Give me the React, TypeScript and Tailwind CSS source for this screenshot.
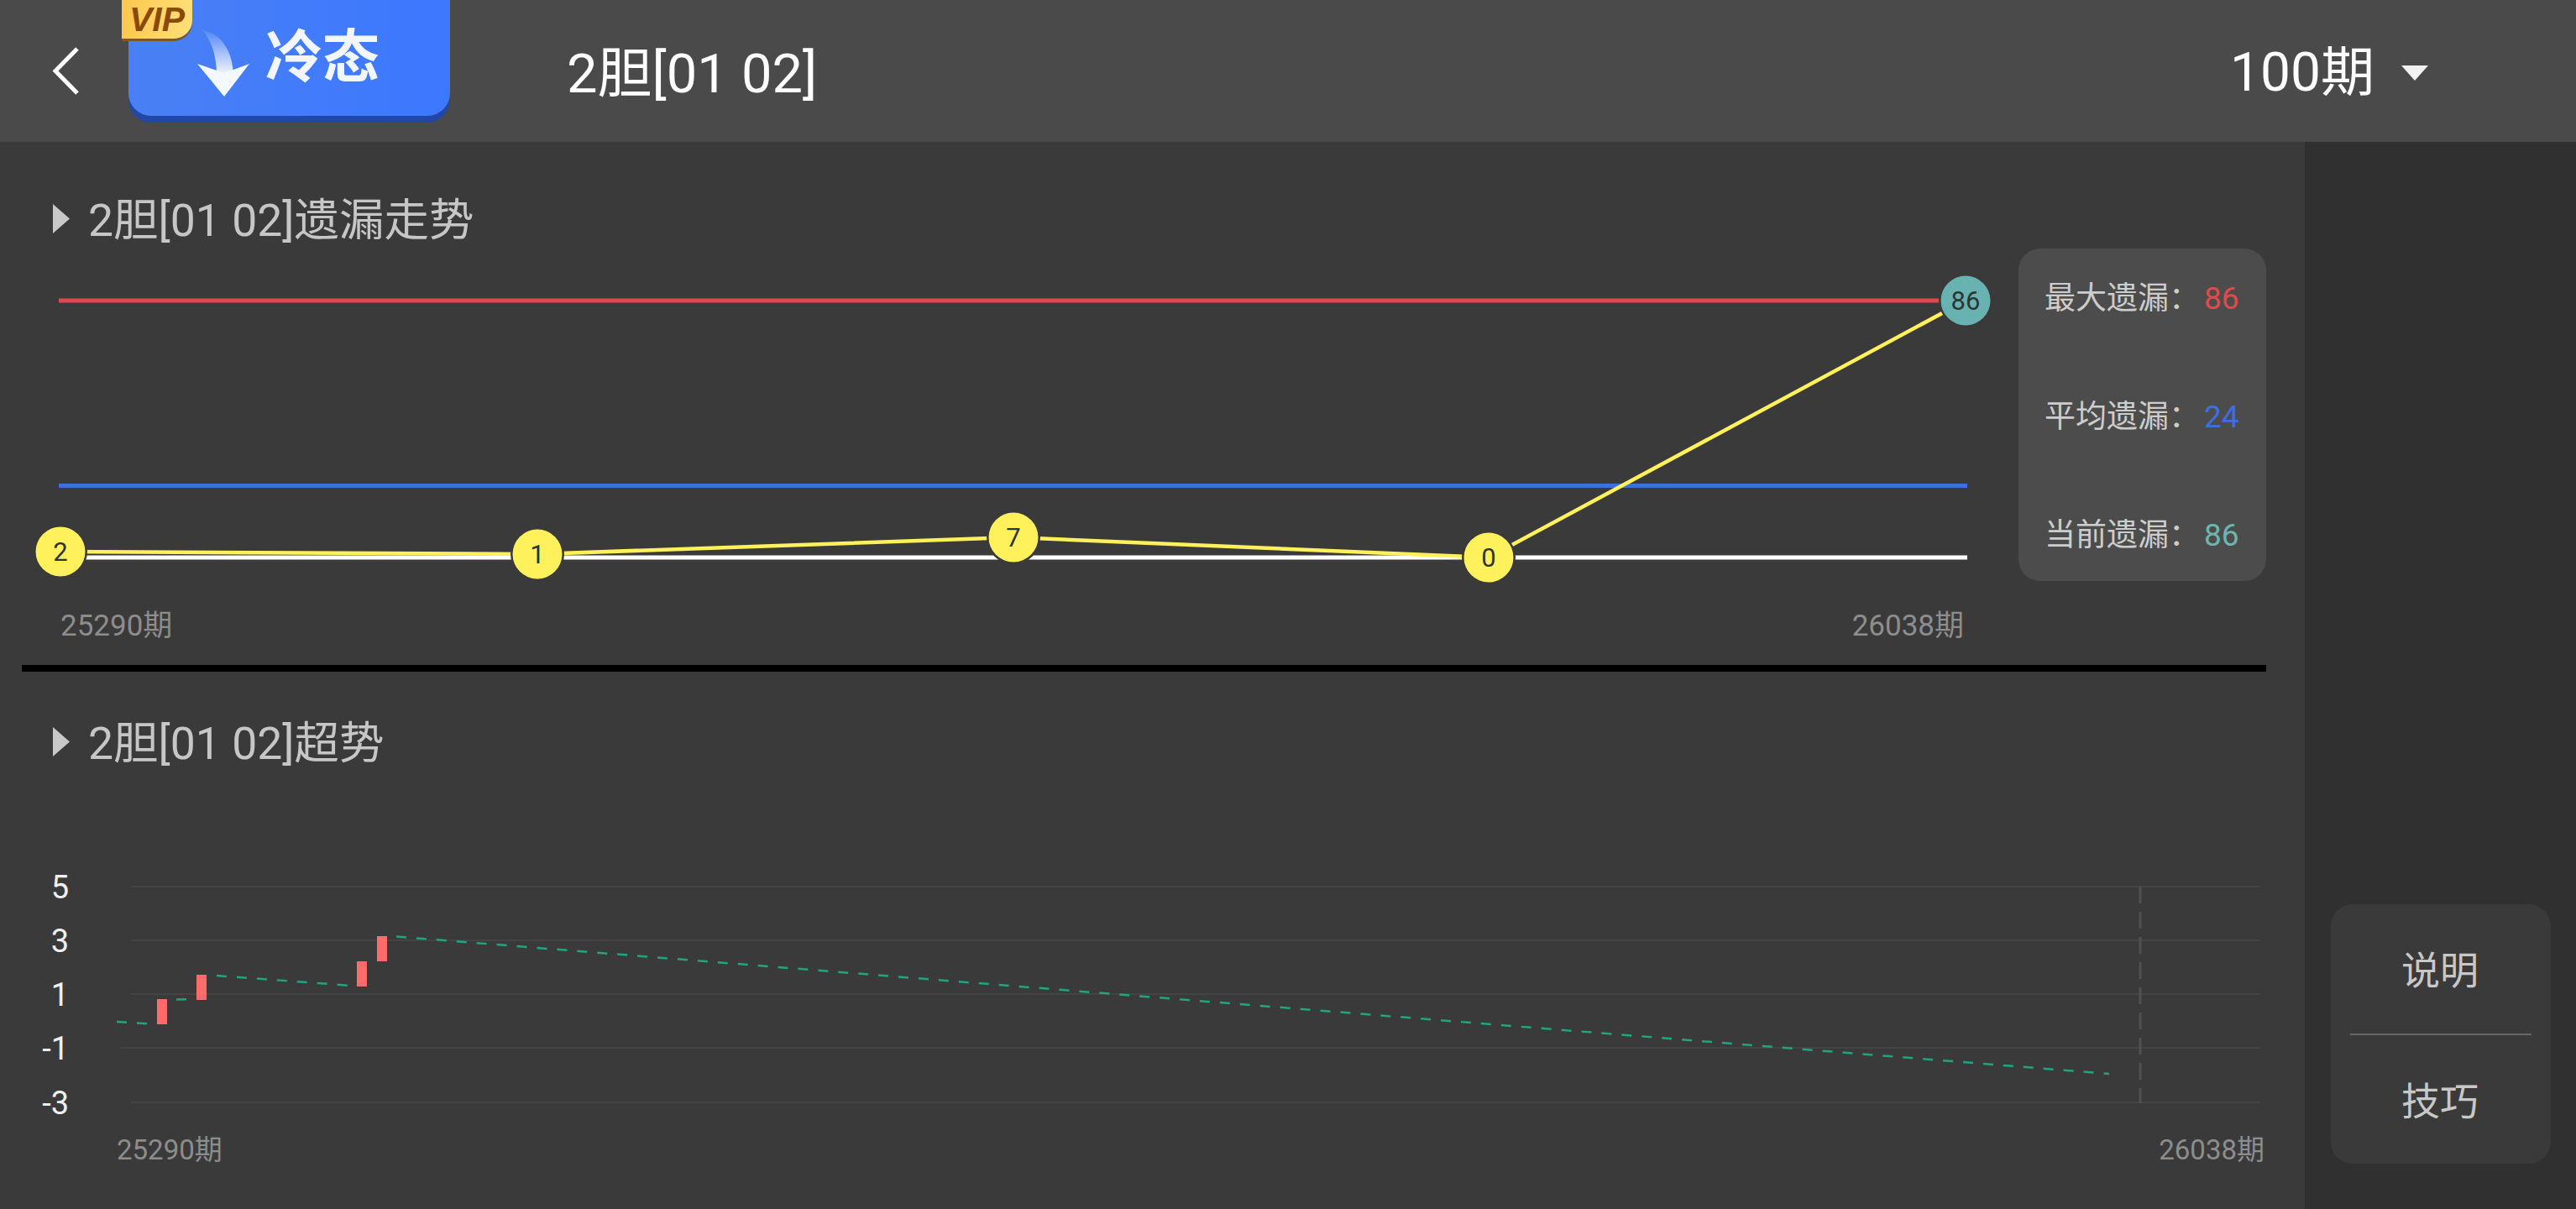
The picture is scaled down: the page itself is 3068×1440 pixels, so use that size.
const FONT = "font-['Roboto','Noto_Sans_CJK_SC',sans-serif]";

function Caret() {
  return (
    <svg width="20" height="35" viewBox="0 0 20 35" className="mb-[6px] shrink-0">
      <path d="M0 0 L20 17.5 L0 35 Z" fill="#c9c9c9" />
    </svg>
  );
}

function SectionTitle({ text, top }: { text: string; top: string }) {
  return (
    <div className={`flex items-center gap-[22px] pl-[63px] ${top}`}>
      <Caret />
      <span className="text-[53.5px] leading-[60px] text-[#c6c6c6]">{text}</span>
    </div>
  );
}

function Node({ x, y, label, fill = "#fff15c" }: { x: number; y: number; label: string; fill?: string }) {
  return (
    <g>
      <circle cx={x} cy={y} r={32} fill="#3a3a3a" />
      <circle cx={x} cy={y} r={29.5} fill={fill} />
      <text x={x} y={y + 11} textAnchor="middle" fontSize="31" fill="#2f3433" fontFamily="Roboto, sans-serif">
        {label}
      </text>
    </g>
  );
}

function MissChart() {
  return (
    <svg width="2404" height="424" viewBox="0 296 2404 424" className="block">
      <rect x="70" y="355.5" width="2272" height="5" fill="#e2474b" />
      <rect x="70" y="576" width="2273" height="5" fill="#3f6fdc" />
      <rect x="70" y="661.5" width="2273" height="5" fill="#ffffff" />
      <polyline points="72,657 640,660 1207,640 1773,664 2341,358" fill="none" stroke="#fff15c" strokeWidth="4.5" />
      <Node x={72} y={657} label="2" />
      <Node x={640} y={660} label="1" />
      <Node x={1207} y={640} label="7" />
      <Node x={1773} y={664} label="0" />
      <Node x={2341} y={358} label="86" fill="#68b2b2" />
    </svg>
  );
}

function TrendChart() {
  const grid: [number, number, string][] = [
    [1056, 156, "5"],
    [1120, 156, "3"],
    [1184, 156, "1"],
    [1248, 143, "-1"],
    [1313, 156, "-3"],
  ];
  const bars = [
    [187, 1190],
    [234, 1161],
    [425, 1145],
    [449, 1115],
  ];
  return (
    <svg width="2745" height="330" viewBox="0 1020 2745 330" className="block">
      {grid.map(([y, x, t]) => (
        <g key={t}>
          <rect x={x} y={y - 1} width={2692 - x} height="2" fill="#444444" />
          <text x="82" y={y + 14} textAnchor="end" fontSize="38" fill="#efefef" fontFamily="Roboto, sans-serif">
            {t}
          </text>
        </g>
      ))}
      <line x1="2549" y1="1056" x2="2549" y2="1314" stroke="#515151" strokeWidth="3" strokeDasharray="20 10" />
      <g stroke="#1fa67c" strokeWidth="2.5" strokeDasharray="12 12" fill="none">
        <line x1="139" y1="1217" x2="187" y2="1220" />
        <line x1="210" y1="1190.5" x2="234" y2="1190" />
        <line x1="258" y1="1162" x2="425" y2="1174.5" />
        <line x1="472" y1="1115.5" x2="2512" y2="1279" />
      </g>
      {bars.map(([x, y]) => (
        <rect key={x} x={x} y={y} width="12" height="30" fill="#ff6b6b" />
      ))}
    </svg>
  );
}

function LegendRow({ label, value, color }: { label: string; value: string; color: string }) {
  return (
    <div className="flex items-center pl-[31px] text-[37px] leading-[44px]">
      <span className="w-[190px] text-[#cdcdcd]">{label}：</span>
      <span className={color}>{value}</span>
    </div>
  );
}

export default function App() {
  return (
    <div className={`flex h-[1440px] w-[3068px] flex-col overflow-hidden bg-[#3a3a3a] ${FONT}`}>
      <header className="flex h-[169px] shrink-0 items-start bg-[#4a4a4a]">
        <svg width="32" height="57" viewBox="0 0 32 57" className="ml-[62px] mt-[56px] shrink-0">
          <path d="M30 2 L4 28.5 L30 55" fill="none" stroke="#ffffff" strokeWidth="5" />
        </svg>
        <div className="relative ml-[59px] h-[138px] w-[383px] shrink-0 rounded-b-[27px] bg-[linear-gradient(90deg,#4a80f4,#3c78ff)] shadow-[0_8px_0_#2148a8]">
          <div className="absolute left-[-8px] top-0 flex h-[46px] w-[84px] items-center justify-center rounded-br-[22px] bg-[linear-gradient(100deg,#fdc64e,#ffe07a)] shadow-[0_3px_0_#7a5a22]">
            <span className="text-[41px] font-bold italic leading-[46px] text-[#8a4a05] font-['Liberation_Sans',sans-serif]">VIP</span>
          </div>
          <svg width="70" height="90" viewBox="0 0 70 90" className="absolute left-[80px] top-[30px]">
            <defs>
              <linearGradient id="tail" x1="0" y1="0" x2="0" y2="1">
                <stop offset="0" stopColor="#ffffff" stopOpacity="0.05" />
                <stop offset="1" stopColor="#ffffff" stopOpacity="0.95" />
              </linearGradient>
            </defs>
            <path d="M7 5 C29 10 44 28 45 60 L25 60 C25 36 19 18 7 5 Z" fill="url(#tail)" />
            <path d="M2 46 L34 57 L64 46 L34 85 Z" fill="#f4f8ff" />
          </svg>
          <span className="absolute left-[163px] top-[27px] text-[68px] font-bold leading-[84px] text-[#f2f7ff]">冷态</span>
        </div>
        <h1 className="ml-[139px] mt-[48px] text-[65px] font-normal leading-[80px] text-white">2胆[01 02]</h1>
        <div className="ml-auto mr-[175px] mt-[47px] flex items-center gap-[31px]">
          <span className="text-[64px] leading-[80px] text-white">100期</span>
          <svg width="34" height="20" viewBox="0 0 34 20">
            <path d="M1 1 H33 L17 19 Z" fill="#f2f2f2" />
          </svg>
        </div>
      </header>

      <div className="flex min-h-0 flex-1">
        <main className="flex w-[2745px] shrink-0 flex-col">
          <section className="flex h-[623px] flex-col">
            <div className="h-[127px]">
              <SectionTitle text="2胆[01 02]遗漏走势" top="pt-[64px]" />
            </div>
            <div className="flex">
              <div className="w-[2404px] shrink-0">
                <MissChart />
                <div className="flex h-[40px] justify-between pl-[72px] pr-[65px] pt-[6px] text-[35px] leading-[40px] text-[#8d8d8d]">
                  <span>25290期</span>
                  <span>26038期</span>
                </div>
              </div>
              <aside className="flex h-[396px] w-[295px] shrink-0 flex-col justify-between rounded-[26px] bg-[#4c4c4c] pb-[32px] pt-[38px]">
                <LegendRow label="最大遗漏" value="86" color="text-[#e04a4c]" />
                <LegendRow label="平均遗漏" value="24" color="text-[#3d6fe0]" />
                <LegendRow label="当前遗漏" value="86" color="text-[#6cb6ae]" />
              </aside>
            </div>
          </section>
          <div className="ml-[26px] h-[8px] w-[2673px] shrink-0 bg-black" />
          <section className="flex flex-1 flex-col">
            <div className="h-[220px]">
              <SectionTitle text="2胆[01 02]超势" top="pt-[56px]" />
            </div>
            <TrendChart />
            <div className="flex justify-between pl-[139px] pr-[48px] text-[33px] leading-[40px] text-[#8d8d8d]">
              <span>25290期</span>
              <span>26038期</span>
            </div>
          </section>
        </main>

        <aside className="flex flex-1 flex-col justify-end bg-[#303030] pb-[54px] pl-[31px] pr-[30px]">
          <div className="flex h-[309px] flex-col rounded-[26px] bg-[#3a3a3a] text-[46px] text-[#c8c8c8]">
            <div className="flex h-[154px] items-center justify-center pt-[5px] pr-[2px]">说明</div>
            <div className="mx-[23px] h-[2px] bg-[#666666]" />
            <div className="flex flex-1 items-center justify-center pt-[5px] pr-[2px]">技巧</div>
          </div>
        </aside>
      </div>
    </div>
  );
}
